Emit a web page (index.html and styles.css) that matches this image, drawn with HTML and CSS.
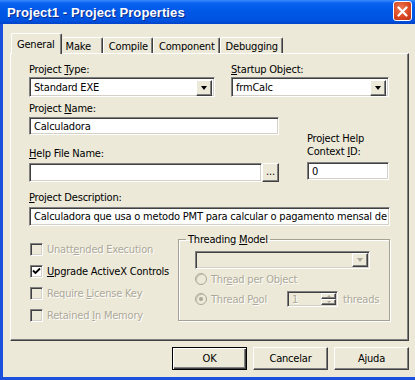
FILE: index.html
```html
<!DOCTYPE html>
<html lang="en">
<head>
    <meta charset="UTF-8">
    <title>Project1 - Project Properties</title>
    <link rel="stylesheet" href="styles.css">
</head>
<body>
    <div class="window">
        <div class="titlebar">
            <span class="title">Project1 - Project Properties</span>
            <div class="close">
                <svg width="11" height="11" viewBox="0 0 11 11"><path d="M1.5 1.5 L9.5 9.5 M9.5 1.5 L1.5 9.5" stroke="#fff" stroke-width="2.2" stroke-linecap="round"/></svg>
            </div>
        </div>
        <div class="client">
            <div class="tabs">
                <div class="tab selected">General</div>
                <div class="tab tab-make">Make</div>
                <div class="tab">Compile</div>
                <div class="tab">Component</div>
                <div class="tab">Debugging</div>
            </div>
            <div class="panel">
                <div class="row-a">
                    <div class="field type-field">
                        <label>Project <u>T</u>ype:</label>
                        <div class="combo">
                            <span class="combo-text">Standard EXE</span>
                            <span class="drop"><i class="arrow"></i></span>
                        </div>
                    </div>
                    <div class="field startup-field">
                        <label><u>S</u>tartup Object:</label>
                        <div class="combo">
                            <span class="combo-text">frmCalc</span>
                            <span class="drop"><i class="arrow"></i></span>
                        </div>
                    </div>
                </div>

                <div class="row-b">
                    <div class="name-col">
                        <label>Project <u>N</u>ame:</label>
                        <div class="textbox name-box">Calculadora</div>
                        <label class="help-label"><u>H</u>elp File Name:</label>
                        <div class="help-row">
                            <div class="textbox help-box"></div>
                            <div class="btn browse">...</div>
                        </div>
                    </div>
                    <div class="context-col">
                        <label>Project Help<br>Context <u>I</u>D:</label>
                        <div class="textbox context-box">0</div>
                    </div>
                </div>

                <div class="row-c">
                    <label><u>P</u>roject Description:</label>
                    <div class="textbox desc-box">Calculadora que usa o metodo PMT para calcular o pagamento mensal de</div>
                </div>

                <div class="row-d">
                    <div class="checks">
                        <div class="check disabled"><span class="box"></span><span>Unatt<u>e</u>nded Execution</span></div>
                        <div class="check">
                            <span class="box">
                                <svg width="9" height="9" viewBox="0 0 9 9"><path d="M1 3.5 L3.5 6 L8 1.5" fill="none" stroke="#000" stroke-width="1.8"/></svg>
                            </span><span><u>U</u>pgrade ActiveX Controls</span>
                        </div>
                        <div class="check disabled"><span class="box"></span><span>Require <u>L</u>icense Key</span></div>
                        <div class="check disabled"><span class="box"></span><span>Retained <u>I</u>n Memory</span></div>
                    </div>
                    <fieldset class="group">
                        <legend>Threading <u>M</u>odel</legend>
                        <div class="combo small disabled">
                            <span class="combo-text"></span>
                            <span class="drop"><i class="arrow"></i></span>
                        </div>
                        <div class="radio-row disabled"><span class="radio"></span><span>Thr<u>e</u>ad per Object</span></div>
                        <div class="radio-row disabled">
                            <span class="radio checked"></span><span class="pool-label">Thread P<u>o</u>ol</span>
                            <div class="spin">
                                <span class="spin-text">1</span>
                                <span class="spin-btns">
                                    <span class="spin-btn"><i class="up"></i></span>
                                    <span class="spin-btn"><i class="down"></i></span>
                                </span>
                            </div>
                            <span class="threads">threads</span>
                        </div>
                    </fieldset>
                </div>
            </div>
            <div class="buttons">
                <div class="btn action default">OK</div>
                <div class="btn action">Cancelar</div>
                <div class="btn action">Ajuda</div>
            </div>
        </div>
    </div>
</body>
</html>
```

FILE: styles.css
```css
* {
    box-sizing: border-box;
}
body {
    margin: 0;
    font-family: "DejaVu Sans Condensed", "Liberation Sans", sans-serif;
    font-size: 11px;
    line-height: 13px;
    letter-spacing: -0.2px;
    color: #000;
    background-color: #ece9d8;
}
.window {
    width: 415px;
    height: 380px;
    display: flex;
    flex-direction: column;
    overflow: hidden;
}

/* title bar */
.titlebar {
    height: 24px;
    flex: none;
    display: flex;
    align-items: center;
    justify-content: space-between;
    padding: 0 3px 0 7px;
    background: linear-gradient(#3a8dff 0, #0a62f0 3px, #0058e6 45%, #0052e0 85%, #0043c8 100%);
}
.title {
    color: #fff;
    font-family: "Liberation Sans", sans-serif;
    font-weight: bold;
    font-size: 13px;
    letter-spacing: 0.1px;
    text-shadow: 1px 1px 0 #0b2c8f;
}
.close {
    width: 19px;
    height: 20px;
    margin-top: -2px;
    border: 1px solid #fff;
    border-radius: 3px;
    background: radial-gradient(circle at 40% 35%, #ee7a55, #d8451f 60%, #b8331a);
    display: flex;
    align-items: center;
    justify-content: center;
}

/* client area */
.client {
    flex: 1;
    display: flex;
    flex-direction: column;
    border-left: 3px solid #1a50dc;
    border-bottom: 3px solid #1a50dc;
    padding: 9px 6px 0 7px;
}
.tabs {
    display: flex;
    align-items: flex-end;
    height: 20px;
    padding-left: 1px;
    position: relative;
    z-index: 1;
}
.tab {
    height: 16px;
    padding: 2px 4px 0 5px;
    border-top: 1px solid #fff;
    border-left: 1px solid #fff;
    border-right: 1px solid #404040;
    box-shadow: inset -1px 0 0 #808080;
    border-radius: 2px 2px 0 0;
    white-space: nowrap;
}
.tab-make {
    padding-left: 4px;
    padding-right: 11px;
}
.tab.selected {
    height: 21px;
    margin-bottom: -1px;
    padding: 4px 6px 0 5px;
    background-color: #ece9d8;
}
.tab.selected + .tab {
    border-left: none;
}
.panel {
    height: 288px;
    border-top: 1px solid #fff;
    border-left: 1px solid #fff;
    border-right: 1px solid #404040;
    border-bottom: 1px solid #404040;
    box-shadow: inset -1px -1px 0 #808080;
    padding: 9px 0 0 18px;
}
label {
    display: block;
}

/* sunken controls */
.textbox, .combo, .spin {
    background-color: #fff;
    border: 1px solid;
    border-color: #808080 #fff #fff #808080;
    box-shadow: inset 1px 1px 0 #404040, inset -1px -1px 0 #d4d0c8;
    padding: 2px 0 0 4px;
    white-space: nowrap;
    overflow: hidden;
}
.combo {
    display: flex;
    height: 20px;
    margin-top: 1px;
    padding: 2px 2px 2px 4px;
}
.combo-text {
    flex: 1;
    padding-top: 1px;
}
.drop, .btn, .spin-btn {
    background-color: #ece9d8;
    border: 1px solid;
    border-color: #fff #404040 #404040 #fff;
    box-shadow: inset -1px -1px 0 #808080;
}
.drop {
    width: 16px;
    height: 16px;
    display: flex;
    align-items: center;
    justify-content: center;
}
.arrow {
    width: 0;
    height: 0;
    border-left: 3.5px solid transparent;
    border-right: 3.5px solid transparent;
    border-top: 4px solid #000;
}
.combo.disabled {
    background-color: #ece9d8;
}
.combo.disabled .arrow {
    border-top-color: #aca899;
}

.row-a {
    display: flex;
}
.type-field {
    width: 186px;
}
.startup-field {
    width: 158px;
    margin-left: 16px;
}

.row-b {
    display: flex;
    align-items: flex-end;
    margin-top: 5px;
}
.name-col {
    width: 250px;
}
.name-box {
    height: 18px;
    margin-top: 2px;
}
.help-label {
    margin-top: 12px;
}
.help-row {
    display: flex;
    margin-top: 3px;
}
.help-box {
    width: 233px;
    height: 19px;
}
.browse {
    width: 17px;
    height: 19px;
    text-align: center;
    line-height: 15px;
}
.context-col {
    width: 82px;
    margin-left: 28px;
    margin-bottom: 2px;
}
.context-box {
    height: 18px;
    margin-top: 4px;
}

.row-c {
    margin-top: 9px;
}
.desc-box {
    width: 361px;
    height: 19px;
    margin-top: 3px;
}

.row-d {
    display: grid;
    grid-template-columns: 149px 212px;
    margin-top: 7px;
}
.checks {
    padding: 5px 0 0 1px;
}
.check {
    display: flex;
    align-items: center;
    height: 22px;
    white-space: nowrap;
}
.box {
    width: 13px;
    height: 13px;
    margin-right: 4px;
    background-color: #fff;
    border: 1px solid;
    border-color: #808080 #fff #fff #808080;
    box-shadow: inset 1px 1px 0 #404040, inset -1px -1px 0 #d4d0c8;
    display: flex;
    align-items: center;
    justify-content: center;
}
.disabled {
    color: #aca899;
    text-shadow: 1px 1px 0 #fff;
}
.check.disabled .box {
    background-color: #ece9d8;
}

.group {
    margin: 0;
    height: 88px;
    padding: 5px 0 0 16px;
    border: 1px solid #a5a293;
    box-shadow: 1px 1px 0 #fff, inset 1px 1px 0 #fff;
}
.group legend {
    margin-left: -9px;
    padding: 0 2px;
}
.combo.small {
    width: 175px;
    height: 18px;
    margin: 0;
    padding: 1px 1px 1px 4px;
}
.combo.small .drop {
    height: 14px;
}
.radio-row {
    display: flex;
    align-items: center;
    height: 20px;
    white-space: nowrap;
}
.radio {
    width: 12px;
    height: 12px;
    margin-right: 4px;
    border-radius: 50%;
    border: 1px solid #aca899;
    box-shadow: inset 1px 1px 0 #c8c4b4;
    display: flex;
    align-items: center;
    justify-content: center;
}
.radio.checked::after {
    content: "";
    width: 4px;
    height: 4px;
    border-radius: 50%;
    background-color: #aca899;
}
.pool-label {
    width: 76px;
}
.spin {
    display: flex;
    width: 51px;
    height: 16px;
    padding: 1px 1px 1px 4px;
    background-color: #ece9d8;
}
.spin-text {
    flex: 1;
}
.spin-btns {
    display: flex;
    flex-direction: column;
    width: 15px;
}
.spin-btn {
    flex: 1;
    display: flex;
    align-items: center;
    justify-content: center;
}
.up, .down {
    width: 0;
    height: 0;
    border-left: 2px solid transparent;
    border-right: 2px solid transparent;
}
.up {
    border-bottom: 2px solid #aca899;
}
.down {
    border-top: 2px solid #aca899;
}
.threads {
    margin-left: 5px;
}

/* bottom buttons */
.buttons {
    display: flex;
    justify-content: flex-end;
    gap: 6px;
    margin-top: 6px;
}
.btn.action {
    width: 75px;
    height: 23px;
    display: flex;
    align-items: center;
    justify-content: center;
}
.btn.default {
    border: 1px solid #000;
    box-shadow: inset 1px 1px 0 #fff, inset -1px -1px 0 #404040, inset -2px -2px 0 #808080;
}
```
